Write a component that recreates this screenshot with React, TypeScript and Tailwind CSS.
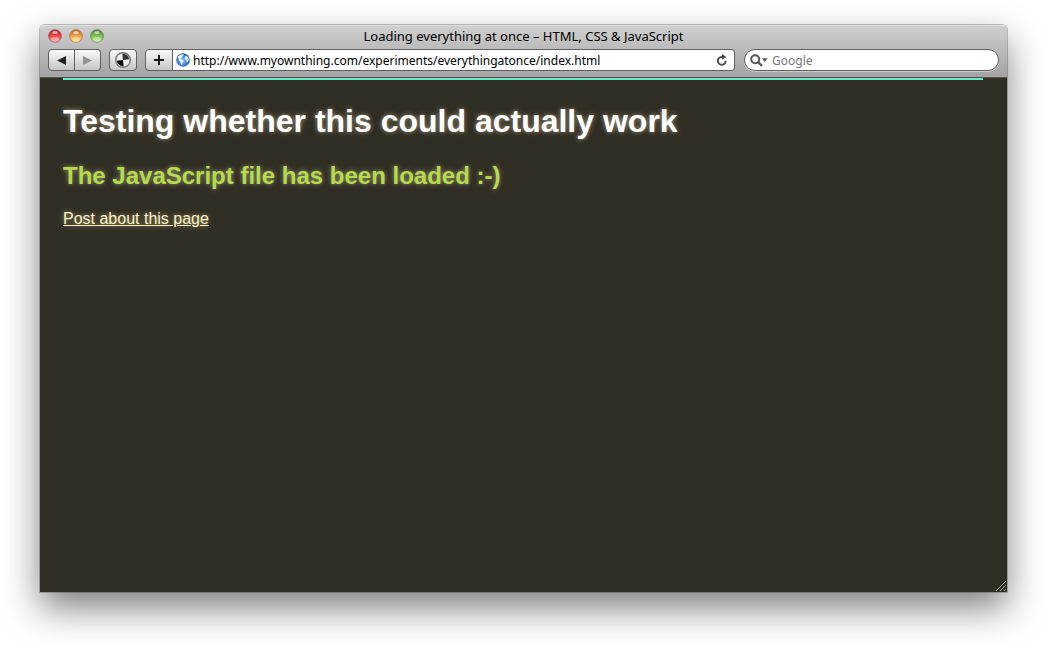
function TrafficLight({ id, label, rim, deep, light }: { id: string; label: string; rim: string; deep: string; light: string }) {
  return (
    <button type="button" aria-label={label} className="block size-[14px]">
      <svg viewBox="0 0 14 14" className="block size-[14px]">
        <defs>
          <linearGradient id={id} x1="0" y1="0" x2="0" y2="1">
            <stop offset="0" stopColor={rim} />
            <stop offset="0.45" stopColor={deep} />
            <stop offset="1" stopColor={light} />
          </linearGradient>
        </defs>
        <circle cx="7" cy="7.4" r="6.4" fill="#e4e4e4" opacity="0.7" />
        <circle cx="7" cy="7" r="6.3" fill={`url(#${id})`} stroke={rim} strokeWidth="0.8" />
        <ellipse cx="7" cy="3.4" rx="2.6" ry="1.5" fill="#fff" opacity="0.6" />
        <ellipse cx="7" cy="10.4" rx="4" ry="2.4" fill="#fff" opacity="0.3" />
      </svg>
    </button>
  );
}

const toolButton =
  "flex h-[22px] items-center justify-center border border-[#606060] bg-linear-to-b from-[#fbfbfb] to-[#c6c6c6]";

export default function App() {
  return (
    <div className="flex min-h-screen flex-col overflow-hidden bg-white px-[40px] pt-[25px] pb-[55px]">
      <div className="flex flex-1 flex-col rounded-t-[5px] shadow-[0_0_0_1px_rgba(0,0,0,0.22),0_16px_36px_rgba(0,0,0,0.5)]">
        <header className="rounded-t-[5px] border-t border-b border-t-[#dedede] border-b-[#555555] bg-linear-to-b from-[#cfcfcf] to-[#a3a3a3] px-2 pb-[6px] font-['Noto_Sans','Open_Sans',sans-serif]">
          <div className="grid h-[23px] grid-cols-[1fr_auto_1fr] items-start pt-[3px]">
            <div className="flex gap-[7px]">
              <TrafficLight id="close" label="Close" rim="#9c3838" deep="#ef3e43" light="#ffabab" />
              <TrafficLight id="minimize" label="Minimize" rim="#a86b2d" deep="#f3a047" light="#ffe594" />
              <TrafficLight id="zoom" label="Zoom" rim="#4d7d32" deep="#78b951" light="#c8f199" />
            </div>
            <div className="text-[13px] leading-[14px] text-black">
              Loading everything at once – HTML, CSS &amp; JavaScript
            </div>
          </div>
          <div className="flex items-center">
            <div className="flex">
              <button type="button" aria-label="Back" className={`${toolButton} w-[27px] rounded-l-[4px]`}>
                <svg viewBox="0 0 9 9" className="size-[9px]">
                  <path d="M0 4.5 9 0v9z" fill="#222" />
                </svg>
              </button>
              <button type="button" aria-label="Forward" className={`${toolButton} w-[26px] rounded-r-[4px] border-l-0`}>
                <svg viewBox="0 0 9 9" className="size-[9px]">
                  <path d="M9 4.5 0 0v9z" fill="#929292" />
                </svg>
              </button>
            </div>
            <button type="button" aria-label="Toggle style" className={`${toolButton} ml-2 w-[28px] rounded-[4px]`}>
              <svg viewBox="0 0 16 16" className="size-4">
                <circle cx="8" cy="8" r="7.3" fill="#ededed" stroke="#777" strokeWidth="1.4" />
                <g transform="rotate(-6 8 8)">
                  <path d="M8 8V1.8A6.2 6.2 0 0 1 14.2 8z" fill="#333" />
                  <path d="M8 8v6.2A6.2 6.2 0 0 1 1.8 8z" fill="#0b0b0b" />
                </g>
              </svg>
            </button>
            <form className="ml-2 flex flex-1" onSubmit={(e) => e.preventDefault()}>
              <button type="button" aria-label="Add bookmark" className={`${toolButton} w-[28px] rounded-l-[4px]`}>
                <svg viewBox="0 0 10 10" className="size-[10px]">
                  <path d="M5 0v10M0 5h10" stroke="#1b1b1b" strokeWidth="2" />
                </svg>
              </button>
              <div className="flex h-[22px] flex-1 items-center rounded-r-[4px] border border-l-0 border-[#606060] bg-white pr-[6px] pl-[3px]">
                <svg viewBox="0 0 14 14" className="size-[14px] shrink-0">
                  <defs>
                    <radialGradient id="globe" cx="0.45" cy="0.55" r="0.6">
                      <stop offset="0" stopColor="#8ec8f8" />
                      <stop offset="0.6" stopColor="#3f83ce" />
                      <stop offset="1" stopColor="#1d4f9f" />
                    </radialGradient>
                  </defs>
                  <circle cx="7" cy="7" r="6.8" fill="url(#globe)" />
                  <path d="M2 3.4 4.6 1.4l3.1.2-.6 1.5-1.5.6L5.9 5 4.4 5.7l1 .9 1.8.5.4 1.3-1.2 1.5-.5 2-.9-.4-.3-2.4-1.4-1.4-.8-2z" fill="#edf7ff" />
                  <path d="m8.8 3.7 1.7-1 1.6 1.6.7 2.6-1.2 2.4-1-.3-.3-1.9-1.6-.8z" fill="#d9ecfc" />
                </svg>
                <input
                  aria-label="Address"
                  defaultValue="http://www.myownthing.com/experiments/everythingatonce/index.html"
                  className="ml-[3px] h-5 min-w-0 flex-1 bg-transparent pt-px text-[12px] text-black outline-none"
                />
                <button type="button" aria-label="Reload" className="block">
                  <svg viewBox="0 0 12 12" className="block size-3" fill="none">
                    <path d="M7 2.9H5.6A3.9 3.9 0 1 0 9.7 6.8" stroke="#4a4a4a" strokeWidth="2" />
                    <path d="M6 0v5.8L10.400 2.9z" fill="#4a4a4a" />
                  </svg>
                </button>
              </div>
            </form>
            <label className="ml-[9px] flex h-[22px] w-[255px] items-center rounded-full border border-[#606060] bg-white pr-3 pl-[5px] shadow-[0_1px_0_#c8c8c8]">
              <svg viewBox="0 0 18 13" className="h-[13px] w-[18px] shrink-0" fill="none">
                <circle cx="5.2" cy="5.2" r="4" stroke="#555" strokeWidth="2" />
                <path d="m8 8 4 4" stroke="#555" strokeWidth="2.4" />
                <path d="M12 4.2h5.6L14.8 8z" fill="#555" />
              </svg>
              <input
                aria-label="Search"
                placeholder="Google"
                className="ml-1 h-5 min-w-0 flex-1 bg-transparent pt-px text-[12px] outline-none placeholder:text-[#777777]"
              />
            </label>
          </div>
        </header>
        <main className="relative flex-1 bg-[#302d23] pr-6 pl-[23px] font-['Liberation_Sans',Arial,sans-serif] text-shadow-[0_0_5px_rgba(255,240,200,0.55)]">
          <div className="h-[2px] bg-[#66e8ca]" />
          <h1 className="mt-[21px] text-[32px] leading-10 font-bold text-white">Testing whether this could actually work</h1>
          <h2 className="mt-5 text-[24px] leading-[30px] font-bold text-[#b4dc48]">The JavaScript file has been loaded :-)</h2>
          <p className="mt-[18px] text-[16px] leading-5">
            <a href="#post" className="text-[#fcf3bf] underline">Post about this page</a>
          </p>
          <svg viewBox="0 0 10 10" className="absolute right-px bottom-px size-[10px]" fill="none">
            <path d="M0 10 10 0M4 10l6-6M8 10l2-2" stroke="#aaa69b" strokeWidth="1" />
          </svg>
        </main>
      </div>
    </div>
  );
}
